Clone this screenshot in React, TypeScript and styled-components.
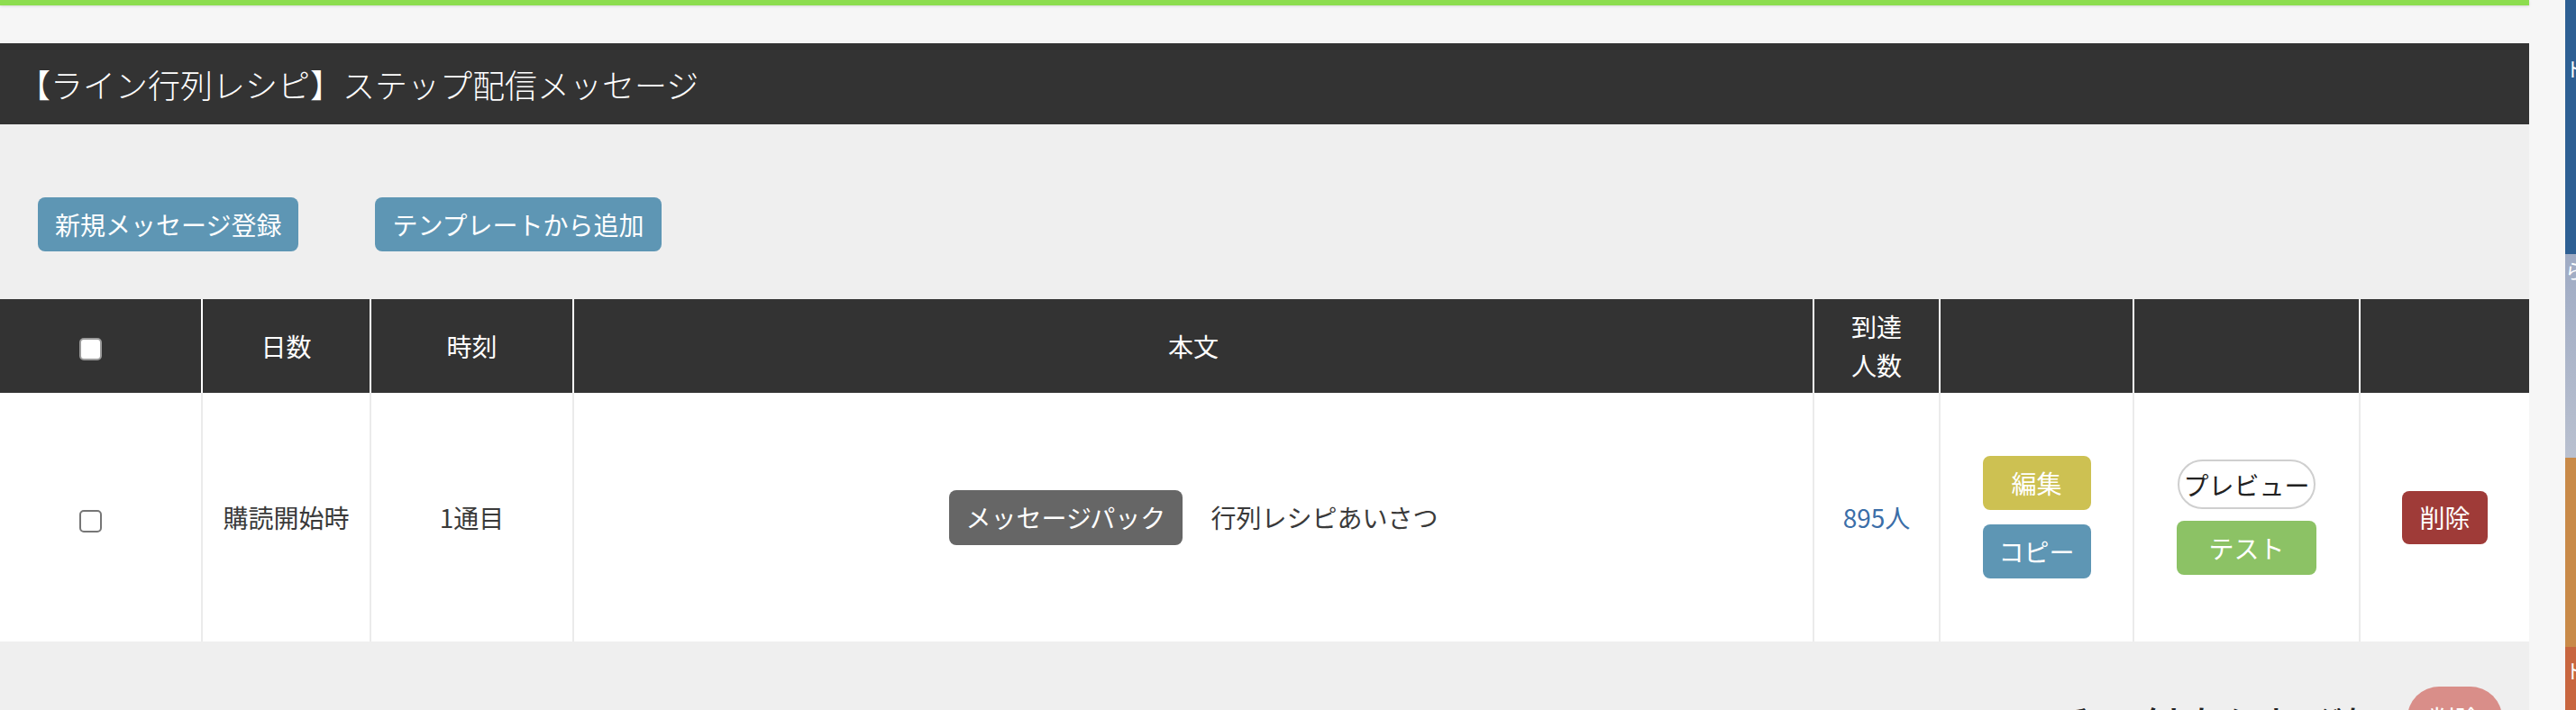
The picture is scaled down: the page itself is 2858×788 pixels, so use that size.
import styled, { createGlobalStyle, css } from 'styled-components';

type Tone = 'blue' | 'yellow' | 'green' | 'red' | 'gray' | 'outline' | 'pink';

const tones: Record<Tone, ReturnType<typeof css>> = {
  blue: css`
    background-color: #5e96b4;
    color: #fff;
  `,
  yellow: css`
    background-color: #cdc152;
    color: #fff;
  `,
  green: css`
    background-color: #8cc265;
    color: #fff;
  `,
  red: css`
    background-color: #9f3b38;
    color: #fff;
  `,
  gray: css`
    background-color: #666;
    color: #fff;
  `,
  outline: css`
    background-color: #fff;
    color: #222;
    border: 2px solid #cfcfcf;
    border-radius: 30px;
  `,
  pink: css`
    background-color: #d98e89;
    color: #fff;
    border-radius: 40px;
  `,
};

const GlobalStyle = createGlobalStyle`
  html, body {
    margin: 0;
    padding: 0;
    background: #f6f6f6;
    overflow: hidden;
  }

  body {
    font-family: "Noto Sans CJK JP", "Noto Sans", "Liberation Sans", sans-serif;
    color: #333;
  }
`;

const Screen = styled.div`
  display: flex;
  width: 2858px;
  height: 788px;
  overflow: hidden;
`;

const Window = styled.div`
  flex: 1;
  background-color: #f6f6f6;
`;

const TopBar = styled.div`
  height: 6px;
  background-color: #8ddd4f;
  box-shadow: 0 1px 3px rgba(0, 0, 0, 0.12);
`;

const Body = styled.div`
  padding-top: 42px;
`;

const Panel = styled.section`
  width: 2806px;
`;

const TitleBar = styled.h1`
  margin: 0;
  height: 90px;
  display: flex;
  align-items: center;
  padding-left: 20px;
  background-color: #333;
  color: #fff;
  font-size: 36px;
  font-weight: 300;
`;

const Content = styled.div`
  background-color: #efefef;
  padding-top: 81px;
`;

const Toolbar = styled.div`
  display: flex;
  gap: 85px;
  padding-left: 42px;
  margin-bottom: 53px;
`;

const Button = styled.button<{ $tone: Tone; $width?: number; $height?: number }>`
  box-sizing: border-box;
  display: inline-flex;
  align-items: center;
  justify-content: center;
  height: ${({ $height }) => $height ?? 60}px;
  width: ${({ $width }) => ($width ? `${$width}px` : 'auto')};
  padding: 0 19px;
  border: none;
  border-radius: 8px;
  font-family: inherit;
  font-size: 28px;
  font-weight: 400;
  line-height: 1;
  white-space: nowrap;
  ${({ $tone }) => tones[$tone]}
`;

const Table = styled.table`
  width: 2806px;
  table-layout: fixed;
  border-collapse: separate;
  border-spacing: 0;
  font-size: 28px;
`;

const HeadCell = styled.th`
  box-sizing: border-box;
  height: 104px;
  padding: 0 28px;
  background-color: #333;
  color: #fff;
  font-weight: 400;
  line-height: 43px;
  text-align: center;
  vertical-align: middle;

  & + & {
    border-left: 2px solid #fff;
  }
`;

const Cell = styled.td<{ $shift?: number }>`
  box-sizing: border-box;
  height: 276px;
  padding: 0 ${({ $shift }) => $shift ?? 0}px 0 0;
  background-color: #fff;
  color: #3a3a3a;
  text-align: center;
  vertical-align: middle;
  line-height: 1.5;

  & + & {
    border-left: 2px solid #ebebeb;
  }
`;

const HeadCheckCell = styled(HeadCell)`
  padding: 0 22px 0 0;
`;

const Check = styled.input.attrs({ type: 'checkbox' })<{ $filled?: boolean }>`
  appearance: none;
  box-sizing: border-box;
  width: 25px;
  height: 25px;
  margin: 0;
  vertical-align: middle;
  border: 2px solid ${({ $filled }) => ($filled ? '#9a9a9a' : '#767676')};
  border-radius: 5px;
  background-color: #fff;
`;

const BodyText = styled.div`
  display: flex;
  align-items: center;
  justify-content: center;
  gap: 31px;
`;

const Reach = styled.span`
  color: #3b6ea8;
`;

const ButtonStack = styled.div<{ $gap: number }>`
  display: flex;
  flex-direction: column;
  align-items: center;
  gap: ${({ $gap }) => $gap}px;
`;

const Footer = styled.div`
  display: flex;
  justify-content: flex-end;
  align-items: center;
  gap: 44px;
  padding: 50px 30px 0 0;
`;

const FooterLabel = styled.span`
  font-size: 28px;
  font-weight: 700;
  color: #222;
`;

const SideStrip = styled.aside`
  flex: none;
  width: 12px;
  margin-left: 40px;
  overflow: hidden;
`;

const StripBlock = styled.div<{ $bg: string; $h: number; $top: number }>`
  height: ${({ $h }) => $h}px;
  padding-top: ${({ $top }) => $top}px;
  box-sizing: border-box;
  background: ${({ $bg }) => $bg};
  color: #fff;
  font-size: 22px;
  line-height: 26px;
  white-space: nowrap;
`;

const columns = [223, 187, 225, 1376, 140, 215, 251, 189];

const App: React.FC = () => (
  <Screen>
    <GlobalStyle />
    <Window>
      <TopBar />
      <Body>
        <Panel>
          <TitleBar>【ライン行列レシピ】ステップ配信メッセージ</TitleBar>
          <Content>
            <Toolbar>
              <Button $tone="blue">新規メッセージ登録</Button>
              <Button $tone="blue">テンプレートから追加</Button>
            </Toolbar>

            <Table>
              <colgroup>
                {columns.map((w, i) => (
                  <col key={i} style={{ width: w }} />
                ))}
              </colgroup>
              <thead>
                <tr>
                  <HeadCheckCell>
                    <Check $filled />
                  </HeadCheckCell>
                  <HeadCell>日数</HeadCell>
                  <HeadCell>時刻</HeadCell>
                  <HeadCell>本文</HeadCell>
                  <HeadCell>到達人数</HeadCell>
                  <HeadCell />
                  <HeadCell />
                  <HeadCell />
                </tr>
              </thead>
              <tbody>
                <tr>
                  <Cell $shift={22}>
                    <Check />
                  </Cell>
                  <Cell>購読開始時</Cell>
                  <Cell>1通目</Cell>
                  <Cell>
                    <BodyText>
                      <Button $tone="gray" $height={61}>
                        メッセージパック
                      </Button>
                      <span>行列レシピあいさつ</span>
                    </BodyText>
                  </Cell>
                  <Cell>
                    <Reach>895人</Reach>
                  </Cell>
                  <Cell>
                    <ButtonStack $gap={16}>
                      <Button $tone="yellow" $width={120}>
                        編集
                      </Button>
                      <Button $tone="blue" $width={120}>
                        コピー
                      </Button>
                    </ButtonStack>
                  </Cell>
                  <Cell>
                    <ButtonStack $gap={13}>
                      <Button $tone="outline" $width={153} $height={55}>
                        プレビュー
                      </Button>
                      <Button $tone="green" $width={155}>
                        テスト
                      </Button>
                    </ButtonStack>
                  </Cell>
                  <Cell>
                    <Button $tone="red" $height={59}>
                      削除
                    </Button>
                  </Cell>
                </tr>
              </tbody>
            </Table>

            <Footer>
              <FooterLabel>チェックしたメッセージを</FooterLabel>
              <Button $tone="pink" $width={105} $height={70}>
                削除
              </Button>
            </Footer>
          </Content>
        </Panel>
      </Body>
    </Window>
    <SideStrip>
      <StripBlock $bg="#2d5f93" $h={282} $top={62}>ト</StripBlock>
      <StripBlock $bg="linear-gradient(#9fabc4, #b9c0cf)" $h={226} $top={4}>ら</StripBlock>
      <StripBlock $bg="#c98a48" $h={210} $top={0} />
      <StripBlock $bg="#c8663f" $h={70} $top={12}>ト</StripBlock>
    </SideStrip>
  </Screen>
);

export default App;
